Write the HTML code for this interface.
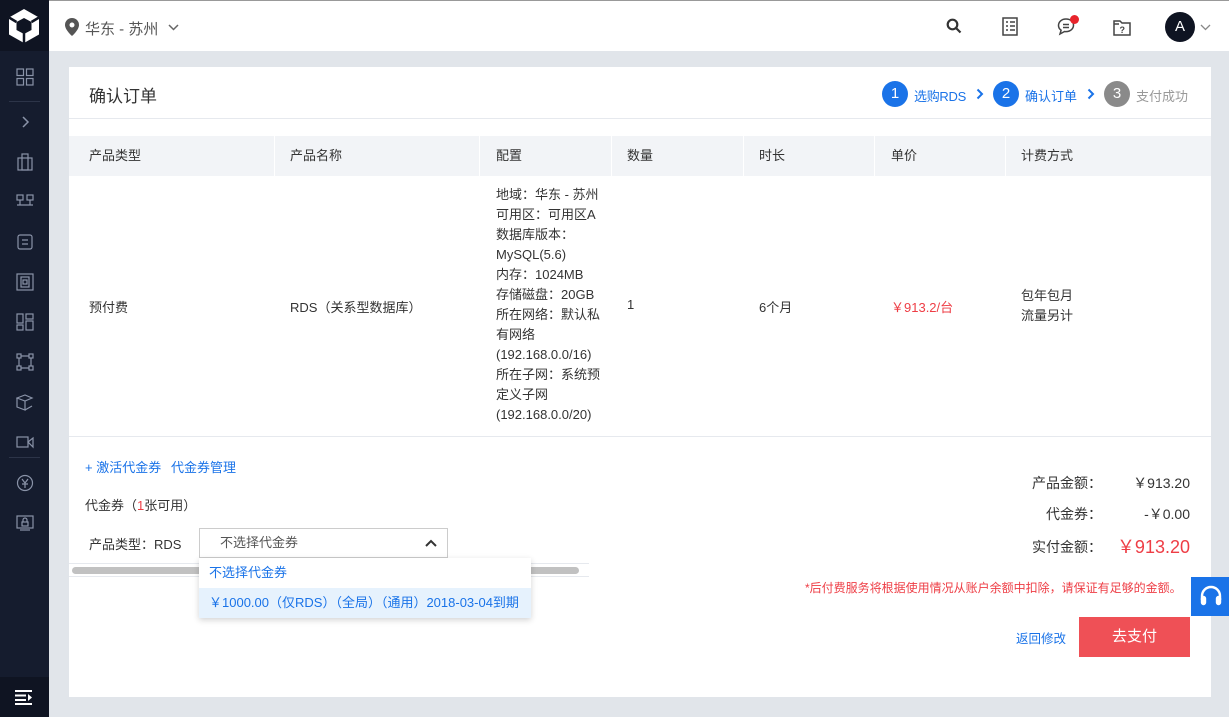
<!DOCTYPE html>
<html><head><meta charset="utf-8"><style>
*{margin:0;padding:0;box-sizing:border-box}
body{width:1229px;height:717px;overflow:hidden;background:#e1e5ea;font-family:"Liberation Sans","Noto Sans CJK SC",sans-serif;font-size:13px;color:#333;position:relative}
.a{position:absolute;white-space:nowrap}
.side{left:0;top:0;width:49px;height:717px;background:#151c2e}
.ic{position:absolute;left:16px;width:18px;height:18px}
.top{left:49px;top:0;width:1180px;height:51px;background:#fff;border-top:1px solid #999}
.card{left:69px;top:67px;width:1142px;height:630px;background:#fff}
.th{top:136px;height:40px;background:#f2f4f7;line-height:40px;padding-left:20px;color:#333}
.blue{color:#1a73e8}
.red{color:#ee3d45}
</style></head><body>
<div class="a side">
 <div class="a" style="left:0;top:0;width:49px;height:51px;background:#0f1422"></div>
 <svg class="a" style="left:7px;top:8px" width="34" height="36" viewBox="0 0 34 36"><path d="M17 1 L32 9.5 L32 26.5 L17 35 L2 26.5 L2 9.5 Z" fill="#fff"/><path d="M17 10 L24.5 14 L24.5 22 L17 26 L9.5 22 L9.5 14 Z" fill="#0f1422"/><path d="M17 18 L17 35 M2 9.5 L9.5 14 M32 9.5 L24.5 14" stroke="#0f1422" stroke-width="2.5"/></svg>
 <svg class="ic" style="top:68px" viewBox="0 0 18 18" fill="none" stroke="#8a93a8" stroke-width="1.2"><rect x="1" y="1" width="6.5" height="6.5"/><rect x="10.5" y="1" width="6.5" height="6.5"/><rect x="1" y="10.5" width="6.5" height="6.5"/><rect x="10.5" y="10.5" width="6.5" height="6.5"/></svg>
 <div class="a" style="left:9px;top:101px;width:31px;height:1px;background:#2c3448"></div>
 <svg class="ic" style="top:113px" viewBox="0 0 18 18" fill="none" stroke="#8a93a8" stroke-width="1.5"><path d="M7 4 L12 9 L7 14"/></svg>
 <svg class="ic" style="top:153px" viewBox="0 0 18 18" fill="none" stroke="#8a93a8" stroke-width="1.2"><rect x="2" y="5" width="14" height="12"/><rect x="6" y="1" width="6" height="16"/></svg>
 <svg class="ic" style="top:193px" viewBox="0 0 18 18" fill="none" stroke="#8a93a8" stroke-width="1.2"><rect x="1" y="2" width="6" height="5"/><rect x="11" y="2" width="6" height="5"/><path d="M4 7v5M14 7v5M1 12h16"/></svg>
 <svg class="ic" style="top:233px" viewBox="0 0 18 18" fill="none" stroke="#8a93a8" stroke-width="1.2"><rect x="2" y="2" width="14" height="14" rx="2"/><path d="M6 7h6M6 11h6"/></svg>
 <svg class="ic" style="top:273px" viewBox="0 0 18 18" fill="none" stroke="#8a93a8" stroke-width="1.2"><rect x="1" y="1" width="16" height="16"/><rect x="5" y="4" width="8" height="10"/><rect x="7" y="7" width="4" height="4"/></svg>
 <svg class="ic" style="top:313px" viewBox="0 0 18 18" fill="none" stroke="#8a93a8" stroke-width="1.2"><rect x="1" y="1" width="6" height="9"/><rect x="10" y="1" width="7" height="5"/><rect x="1" y="12" width="6" height="5"/><rect x="10" y="8" width="7" height="9"/></svg>
 <svg class="ic" style="top:353px" viewBox="0 0 18 18" fill="none" stroke="#8a93a8" stroke-width="1.2"><rect x="1" y="1" width="4" height="4"/><rect x="13" y="1" width="4" height="4"/><rect x="1" y="13" width="4" height="4"/><rect x="13" y="13" width="4" height="4"/><path d="M5 3h8M5 15h8M3 5v8M15 5v8"/></svg>
 <svg class="ic" style="top:393px" viewBox="0 0 18 18" fill="none" stroke="#8a93a8" stroke-width="1.2"><path d="M1 5 L9 2 L16 5 L9 8 Z M1 5v9l8 3V8M9 17l7-4"/></svg>
 <svg class="ic" style="top:433px" viewBox="0 0 18 18" fill="none" stroke="#8a93a8" stroke-width="1.2"><rect x="1" y="4" width="11" height="10"/><path d="M12 9l5-4v9z"/></svg>
 <div class="a" style="left:9px;top:457px;width:31px;height:1px;background:#2c3448"></div>
 <svg class="ic" style="top:474px" viewBox="0 0 18 18" fill="none" stroke="#8a93a8" stroke-width="1.2"><circle cx="9" cy="9" r="7.5"/><path d="M6 5l3 4 3-4M9 9v5M6 10h6"/></svg>
 <svg class="ic" style="top:514px" viewBox="0 0 18 18" fill="none" stroke="#8a93a8" stroke-width="1.2"><rect x="1" y="2" width="16" height="12"/><path d="M4 16h10"/><rect x="6" y="8" width="6" height="4"/><path d="M7 8V6a2 2 0 014 0v2"/></svg>
 <div class="a" style="left:0;top:677px;width:49px;height:40px;background:#0f1422"></div>
 <svg class="a" style="left:15px;top:689px" width="19" height="16" viewBox="0 0 19 16" fill="#fff"><rect x="0" y="1" width="17" height="2"/><rect x="0" y="5.5" width="11" height="2"/><rect x="0" y="10" width="11" height="2"/><rect x="0" y="14" width="17" height="2"/><path d="M13 5 L17 8.5 L13 12Z"/></svg>
</div>
<div class="a top">
 <svg class="a" style="left:16px;top:17px" width="14" height="18" viewBox="0 0 14 18"><path d="M7 0a7 7 0 00-7 7c0 5 7 11 7 11s7-6 7-11a7 7 0 00-7-7z" fill="#555"/><circle cx="7" cy="7" r="2.5" fill="#fff"/></svg>
 <div class="a" style="left:36px;top:17px;font-size:15px;color:#555">华东 - 苏州</div>
 <svg class="a" style="left:119px;top:23px" width="11" height="7" viewBox="0 0 11 7" fill="none" stroke="#666" stroke-width="1.5"><path d="M1 1l4.5 4.5L10 1"/></svg>
 <svg class="a" style="left:897px;top:17px" width="16" height="16" viewBox="0 0 16 16" fill="none" stroke="#333" stroke-width="2.2"><circle cx="6.5" cy="6.5" r="4.8"/><path d="M10 10l4.5 4.5"/></svg>
 <svg class="a" style="left:953px;top:16px" width="16" height="19" viewBox="0 0 16 19" fill="none" stroke="#444" stroke-width="1.5"><rect x="1" y="1" width="14" height="17"/><path d="M4 5h2M8 5h5M4 9h2M8 9h5M4 13h2M8 13h5"/></svg>
 <svg class="a" style="left:1008px;top:16px" width="20" height="19" viewBox="0 0 20 19" fill="none" stroke="#444" stroke-width="1.5"><path d="M9 2C4.5 2 1.5 5 1.5 8.5c0 2 1 3.6 2.6 4.7L3 17l4.5-2.5c.5.1 1 .1 1.5.1 4.5 0 7.5-3 7.5-6.5S13.5 2 9 2z"/><path d="M6 7.5h6M6 10.5h6"/></svg>
 <div class="a" style="left:1021px;top:14px;width:9px;height:9px;border-radius:50%;background:#e8242c"></div>
 <svg class="a" style="left:1064px;top:17px" width="18" height="18" viewBox="0 0 18 18" fill="none" stroke="#444" stroke-width="1.5"><path d="M1 3h6l2 2h8v12H1z"/><path d="M1 6h5"/><text x="6.5" y="15" font-size="9" fill="#444" stroke="none" font-family="Liberation Sans" font-weight="bold">?</text></svg>
 <div class="a" style="left:1116px;top:11px;width:30px;height:30px;border-radius:50%;background:#0f1422;color:#fff;text-align:center;line-height:30px;font-size:15px">A</div>
 <svg class="a" style="left:1151px;top:23px" width="11" height="7" viewBox="0 0 11 7" fill="none" stroke="#888" stroke-width="1.3"><path d="M1 1l4.5 4.5L10 1"/></svg>
</div>
<div class="a card"></div>
<div class="a" style="left:89px;top:82px;font-size:17px;color:#333">确认订单</div>
<div class="a" style="left:69px;top:118px;width:1142px;height:1px;background:#e6e9ee"></div>
<div class="a" style="left:882px;top:81px;width:26px;height:26px;border-radius:50%;background:#1a73e8;color:#fff;text-align:center;line-height:26px;font-size:15px">1</div>
<div class="a blue" style="left:914px;top:86px;letter-spacing:-0.3px">选购RDS</div>
<svg class="a" style="left:976px;top:88px" width="8" height="12" viewBox="0 0 8 12" fill="none" stroke="#1a73e8" stroke-width="2"><path d="M1.5 1.5l4.5 4.5-4.5 4.5"/></svg>
<div class="a" style="left:993px;top:81px;width:26px;height:26px;border-radius:50%;background:#1a73e8;color:#fff;text-align:center;line-height:26px;font-size:15px">2</div>
<div class="a blue" style="left:1025px;top:86px">确认订单</div>
<svg class="a" style="left:1087px;top:88px" width="8" height="12" viewBox="0 0 8 12" fill="none" stroke="#1a73e8" stroke-width="2"><path d="M1.5 1.5l4.5 4.5-4.5 4.5"/></svg>
<div class="a" style="left:1104px;top:81px;width:26px;height:26px;border-radius:50%;background:#8a8a8a;color:#fff;text-align:center;line-height:26px;font-size:15px">3</div>
<div class="a" style="left:1136px;top:86px;color:#999">支付成功</div>

<div class="a th" style="left:69px;width:205px">产品类型</div>
<div class="a th" style="left:275px;width:204px;padding-left:15px">产品名称</div>
<div class="a th" style="left:480px;width:131px;padding-left:16px">配置</div>
<div class="a th" style="left:612px;width:131px;padding-left:15px">数量</div>
<div class="a th" style="left:744px;width:130px;padding-left:15px">时长</div>
<div class="a th" style="left:875px;width:130px;padding-left:16px">单价</div>
<div class="a th" style="left:1006px;width:205px;padding-left:15px">计费方式</div>
<div class="a" style="left:89px;top:297px">预付费</div>
<div class="a" style="left:290px;top:297px">RDS（关系型数据库）</div>
<div class="a" style="left:496px;top:185px;line-height:20px">地域：华东 - 苏州<br>可用区：可用区A<br>数据库版本：<br>MySQL(5.6)<br>内存：1024MB<br>存储磁盘：20GB<br>所在网络：默认私<br>有网络<br>(192.168.0.0/16)<br>所在子网：系统预<br>定义子网<br>(192.168.0.0/20)</div>
<div class="a" style="left:627px;top:297px">1</div>
<div class="a" style="left:759px;top:297px">6个月</div>
<div class="a red" style="left:891px;top:297px">￥913.2/台</div>
<div class="a" style="left:1021px;top:286px;line-height:20px">包年包月<br>流量另计</div>
<div class="a" style="left:69px;top:436px;width:1142px;height:1px;background:#e6e9ee"></div>

<div class="a blue" style="left:85px;top:457px">+ 激活代金券</div>
<div class="a blue" style="left:171px;top:457px">代金券管理</div>
<div class="a" style="left:85px;top:495px">代金券（<span class="red">1</span>张可用）</div>
<div class="a" style="left:89px;top:534px">产品类型：RDS</div>
<div class="a" style="left:199px;top:528px;width:249px;height:30px;border:1px solid #ccc;padding-left:20px;line-height:28px;color:#555">不选择代金券</div>
<svg class="a" style="left:425px;top:539px" width="12" height="8" viewBox="0 0 12 8" fill="none" stroke="#333" stroke-width="2"><path d="M1 7l5-5 5 5"/></svg>
<div class="a" style="left:69px;top:563px;width:520px;height:14px;border-top:1px solid #e6e9ee;border-bottom:1px solid #e6e9ee"></div>
<div class="a" style="left:72px;top:567px;width:507px;height:7px;border-radius:4px;background:#c1c1c1"></div>
<div class="a" style="left:199px;top:558px;width:332px;height:60px;background:#fff;box-shadow:0 2px 6px rgba(0,0,0,.18)">
 <div style="height:30px;line-height:30px;padding-left:10px;color:#1a73e8">不选择代金券</div>
 <div style="height:30px;line-height:30px;padding-left:10px;color:#1a73e8;background:#e6f2fd">￥1000.00（仅RDS）（全局）（通用）2018-03-04到期</div>
</div>

<div class="a" style="left:1000px;top:473px;width:102px;text-align:right;font-size:14px">产品金额：</div>
<div class="a" style="left:1100px;top:473px;width:90px;text-align:right;font-size:14px">￥913.20</div>
<div class="a" style="left:1000px;top:504px;width:102px;text-align:right;font-size:14px">代金券：</div>
<div class="a" style="left:1100px;top:504px;width:90px;text-align:right;font-size:14px">-￥0.00</div>
<div class="a" style="left:1000px;top:537px;width:102px;text-align:right;font-size:14px">实付金额：</div>
<div class="a red" style="left:1090px;top:533px;width:100px;text-align:right;font-size:18px">￥913.20</div>
<div class="a red" style="left:805px;top:579px;font-size:12px">*后付费服务将根据使用情况从账户余额中扣除，请保证有足够的金额。</div>
<div class="a" style="left:1191px;top:577px;width:38px;height:39px;background:#1a73e8"></div>
<svg class="a" style="left:1199px;top:585px" width="24" height="22" viewBox="0 0 24 22" fill="none" stroke="#fff" stroke-width="2.4"><path d="M3 15V11a9 9 0 0118 0v4"/><rect x="3" y="12" width="3" height="7" rx="1.5" fill="#fff"/><rect x="18" y="12" width="3" height="7" rx="1.5" fill="#fff"/></svg>
<div class="a blue" style="left:1016px;top:628px;font-size:12.5px">返回修改</div>
<div class="a" style="left:1079px;top:617px;width:111px;height:40px;background:#ef5056;color:#fff;text-align:center;line-height:40px;font-size:15px">去支付</div>
</body></html>
